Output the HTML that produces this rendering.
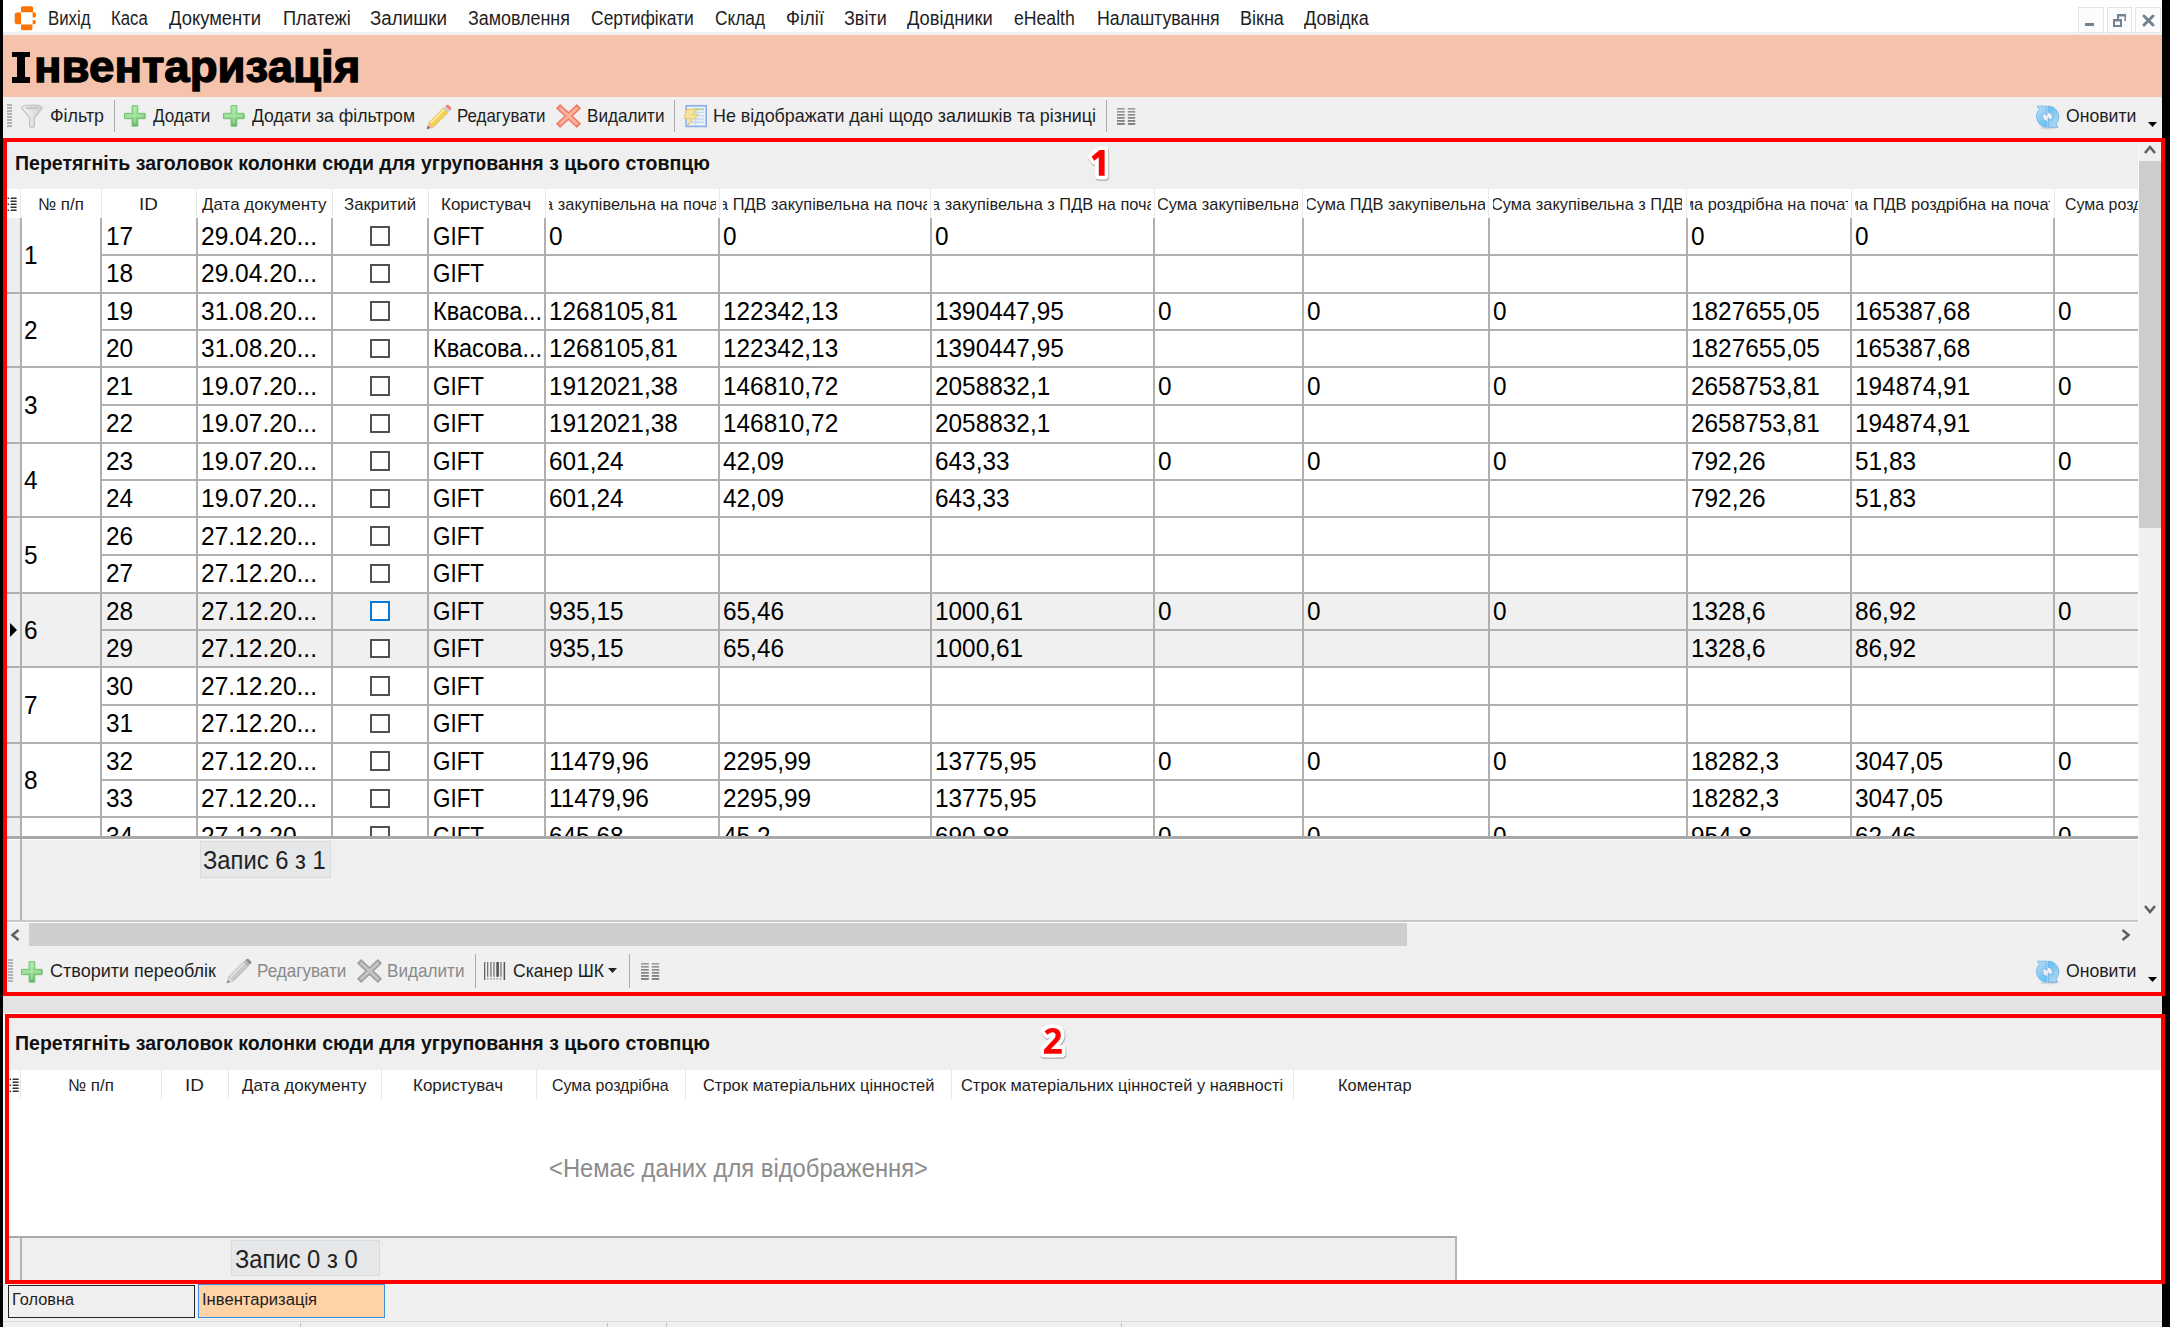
<!DOCTYPE html>
<html><head><meta charset="utf-8"><title>Інвентаризація</title>
<style>
html,body{margin:0;padding:0}
body{width:2170px;height:1327px;overflow:hidden;position:relative;font-family:"Liberation Sans", sans-serif;background:#F0F0F0}
.a{position:absolute}
.t{position:absolute;white-space:pre;line-height:1;transform-origin:0 0}
svg{overflow:visible}
</style></head><body>
<div class="a" style="left:0px;top:0px;width:2170px;height:1327px;background:#F0F0F0;"></div>
<div class="a" style="left:3px;top:0px;width:2159px;height:32px;background:#FFFFFF;"></div>
<div class="a" style="left:3px;top:32px;width:2159px;height:3px;background:#EEEFF0;"></div>
<svg class="a" style="left:14px;top:6px" width="23" height="25" viewBox="0 0 23 25">
<g fill="#FF7300">
<path d="M7 0.3h10.5q1.6 0 1.6 1.8v4.1H7V2.1Q7 0.3 8.6 0.3z"/>
<path d="M7 6.4v11.8H3q-2.3 0-2.3-2.3V8.7q0-2.3 2.3-2.3z"/>
<path d="M7 18.4h11.4v4.1q0 1.8-1.6 1.8H8.6Q7 24.3 7 22.5z"/>
<path d="M18.6 6.3h1.6q1.7 0 1.7 1.7v1.8q0 1.7-1.7 1.7h-1.6z"/>
<path d="M18.6 14h1.6q1.7 0 1.7 1.7v0.8q0 1.7-1.7 1.7h-1.6z"/>
</g></svg>
<div class="t" style="left:47.90px;top:9.49px;font-size:19.5px;font-weight:400;color:#1E1E1E;transform:scaleX(0.8610);">Вихід</div>
<div class="t" style="left:111.30px;top:9.49px;font-size:19.5px;font-weight:400;color:#1E1E1E;transform:scaleX(0.8572);">Каса</div>
<div class="t" style="left:168.90px;top:9.49px;font-size:19.5px;font-weight:400;color:#1E1E1E;transform:scaleX(0.9445);">Документи</div>
<div class="t" style="left:282.50px;top:9.49px;font-size:19.5px;font-weight:400;color:#1E1E1E;transform:scaleX(0.9348);">Платежі</div>
<div class="t" style="left:369.80px;top:9.49px;font-size:19.5px;font-weight:400;color:#1E1E1E;transform:scaleX(0.9629);">Залишки</div>
<div class="t" style="left:467.60px;top:9.49px;font-size:19.5px;font-weight:400;color:#1E1E1E;transform:scaleX(0.9171);">Замовлення</div>
<div class="t" style="left:591.10px;top:9.49px;font-size:19.5px;font-weight:400;color:#1E1E1E;transform:scaleX(0.8967);">Сертифікати</div>
<div class="t" style="left:715.20px;top:9.49px;font-size:19.5px;font-weight:400;color:#1E1E1E;transform:scaleX(0.8877);">Склад</div>
<div class="t" style="left:786.00px;top:9.49px;font-size:19.5px;font-weight:400;color:#1E1E1E;transform:scaleX(0.9430);">Філії</div>
<div class="t" style="left:843.80px;top:9.49px;font-size:19.5px;font-weight:400;color:#1E1E1E;transform:scaleX(0.9223);">Звіти</div>
<div class="t" style="left:907.00px;top:9.49px;font-size:19.5px;font-weight:400;color:#1E1E1E;transform:scaleX(0.9373);">Довідники</div>
<div class="t" style="left:1014.20px;top:9.49px;font-size:19.5px;font-weight:400;color:#1E1E1E;transform:scaleX(0.9045);">eHealth</div>
<div class="t" style="left:1096.50px;top:9.49px;font-size:19.5px;font-weight:400;color:#1E1E1E;transform:scaleX(0.9096);">Налаштування</div>
<div class="t" style="left:1239.90px;top:9.49px;font-size:19.5px;font-weight:400;color:#1E1E1E;transform:scaleX(0.9245);">Вікна</div>
<div class="t" style="left:1303.80px;top:9.49px;font-size:19.5px;font-weight:400;color:#1E1E1E;transform:scaleX(0.9222);">Довідка</div>
<div class="a" style="left:2078px;top:7px;width:25.5px;height:25.5px;background:#FCFCFC;border:1px solid #E2E4E6;box-sizing:border-box;"></div>
<div class="a" style="left:2106.5px;top:7px;width:25.5px;height:25.5px;background:#FCFCFC;border:1px solid #E2E4E6;box-sizing:border-box;"></div>
<div class="a" style="left:2135px;top:7px;width:25.5px;height:25.5px;background:#FCFCFC;border:1px solid #E2E4E6;box-sizing:border-box;"></div>
<svg class="a" style="left:2078px;top:7px" width="84" height="26" viewBox="0 0 84 26">
<g fill="#738293">
<rect x="7" y="16" width="9" height="3"/>
<path d="M39 7h9v7h-1.5V9.5H41V12h-2z"/>
<path d="M35 12h9v8h-9z M37 14.5v3.5h5v-3.5z" fill-rule="evenodd"/>
</g>
<path d="M66 9L75 18M75 9L66 18" stroke="#738293" stroke-width="3" stroke-linecap="round"/>
</svg>
<div class="a" style="left:3px;top:35px;width:2159px;height:61.5px;background:#F5C3AB;"></div>
<div class="a" style="left:12.2px;top:51.5px;width:18px;height:5.6px;background:#000;"></div>
<div class="a" style="left:12.2px;top:77.2px;width:18px;height:5.5px;background:#000;"></div>
<div class="a" style="left:17px;top:51.5px;width:8.4px;height:31.2px;background:#000;"></div>
<div class="t" style="left:33.60px;top:44.82px;font-size:44.5px;font-weight:700;color:#000;transform:scaleX(1.0254);-webkit-text-stroke:1.3px #000;">нвентаризація</div>
<div class="a" style="left:3px;top:96.5px;width:2159px;height:41.5px;background:#F0F0F0;"></div>
<div class="a" style="left:7px;top:104px;width:5px;height:1.5px;background:#B2B2B2;"></div>
<div class="a" style="left:7px;top:107px;width:5px;height:1.5px;background:#B2B2B2;"></div>
<div class="a" style="left:7px;top:110px;width:5px;height:1.5px;background:#B2B2B2;"></div>
<div class="a" style="left:7px;top:113px;width:5px;height:1.5px;background:#B2B2B2;"></div>
<div class="a" style="left:7px;top:116px;width:5px;height:1.5px;background:#B2B2B2;"></div>
<div class="a" style="left:7px;top:119px;width:5px;height:1.5px;background:#B2B2B2;"></div>
<div class="a" style="left:7px;top:122px;width:5px;height:1.5px;background:#B2B2B2;"></div>
<div class="a" style="left:7px;top:125px;width:5px;height:1.5px;background:#B2B2B2;"></div>
<svg class="a" style="left:21px;top:104px" width="22" height="25" viewBox="0 0 22 25">
<defs><linearGradient id="fng" x1="0" y1="0" x2="1" y2="0"><stop offset="0" stop-color="#F6F6F6"/><stop offset="0.55" stop-color="#E2E2E2"/><stop offset="1" stop-color="#CFCFCF"/></linearGradient></defs>
<path d="M0.8 3.8Q0.8 1 11 1Q21.2 1 21.2 3.8L13.3 14.2V22.6Q11 24.2 8.7 22.6V14.2Z" fill="url(#fng)" stroke="#BDBDBD" stroke-width="1.1" stroke-linejoin="round"/>
<ellipse cx="11" cy="4" rx="7.2" ry="1.4" fill="#C8C8C8"/>
</svg>
<div class="t" style="left:50.00px;top:106.84px;font-size:18.5px;font-weight:400;color:#1E1E1E;transform:scaleX(0.9654);">Фільтр</div>
<div class="a" style="left:114px;top:99.5px;width:1.3px;height:32.5px;background:#ABABAB;"></div>
<svg class="a" style="left:124px;top:105px" width="22" height="22" viewBox="0 0 22 22">
<defs><linearGradient id="gp124_105" x1="0" y1="0" x2="0.3" y2="1"><stop offset="0" stop-color="#B0F2AA"/><stop offset="0.55" stop-color="#95DC92"/><stop offset="1" stop-color="#6CB86A"/></linearGradient></defs>
<path d="M8.1 0.7h5.7v7.6h7.4v5.4h-7.4v7.5H8.1v-7.5H0.5V8.3h7.6z" fill="url(#gp124_105)" stroke="#78C076" stroke-width="1"/>
<path d="M10.9 2.5v16M2.5 11h16.5" stroke="#B2F0AE" stroke-width="1.4" opacity="0.7"/>
</svg>
<div class="t" style="left:152.60px;top:106.84px;font-size:18.5px;font-weight:400;color:#1E1E1E;transform:scaleX(0.9242);">Додати</div>
<svg class="a" style="left:222.6px;top:105px" width="22" height="22" viewBox="0 0 22 22">
<defs><linearGradient id="gp222_105" x1="0" y1="0" x2="0.3" y2="1"><stop offset="0" stop-color="#B0F2AA"/><stop offset="0.55" stop-color="#95DC92"/><stop offset="1" stop-color="#6CB86A"/></linearGradient></defs>
<path d="M8.1 0.7h5.7v7.6h7.4v5.4h-7.4v7.5H8.1v-7.5H0.5V8.3h7.6z" fill="url(#gp222_105)" stroke="#78C076" stroke-width="1"/>
<path d="M10.9 2.5v16M2.5 11h16.5" stroke="#B2F0AE" stroke-width="1.4" opacity="0.7"/>
</svg>
<div class="t" style="left:251.60px;top:106.84px;font-size:18.5px;font-weight:400;color:#1E1E1E;transform:scaleX(0.9518);">Додати за фільтром</div>
<svg class="a" style="left:425.8px;top:103.5px" width="26" height="26" viewBox="0 0 26 26">
<path d="M1 25L3 18.5L17.5 4L22 8.5L7.5 23z" fill="#F3D24E" stroke="#D2A640" stroke-width="0.9" stroke-dasharray="1.2 0.8"/>
<path d="M4.5 19L18.5 5" stroke="#FBF0B0" stroke-width="1.6"/>
<path d="M1 25L3 18.5L7.5 23z" fill="#F7B99C"/>
<path d="M1 25L1.9 22L4 24.1z" fill="#555"/>
<path d="M17.5 4L19.5 2L24 6.5L22 8.5z" fill="#CFCFCF"/>
<path d="M19.5 2L20.5 1Q21.5 0.3 22.5 1L25 3.5Q25.7 4.5 25 5.5L24 6.5z" fill="#EE7E7E"/>
</svg>
<div class="t" style="left:456.50px;top:106.84px;font-size:18.5px;font-weight:400;color:#1E1E1E;transform:scaleX(0.9141);">Редагувати</div>
<svg class="a" style="left:557px;top:105px" width="23" height="22" viewBox="0 0 23 22">
<path d="M3.2 3.2L19.8 18.8M19.8 3.2L3.2 18.8" stroke="#F27B62" stroke-width="6" stroke-linecap="square"/>
<path d="M3.5 3.5L19.5 18.5M19.5 3.5L3.5 18.5" stroke="#FDB49E" stroke-width="3" stroke-linecap="square"/>
</svg>
<div class="t" style="left:586.50px;top:106.84px;font-size:18.5px;font-weight:400;color:#1E1E1E;transform:scaleX(0.9259);">Видалити</div>
<div class="a" style="left:674px;top:99.5px;width:1.3px;height:32.5px;background:#ABABAB;"></div>
<svg class="a" style="left:683px;top:104px" width="25" height="24" viewBox="0 0 25 24">
<rect x="3.2" y="1.8" width="20" height="20.6" fill="#EEF3FB" stroke="#8DB2E2" stroke-width="1.7"/>
<g stroke="#C4D8F0" stroke-width="1.5"><path d="M6 8.6h15M6 11.8h15M6 15h15M6 18.2h15"/><path d="M12.8 6.5v14.5"/></g>
<path d="M10 5.3h11" stroke="#9BD39B" stroke-width="1.6"/>
<path d="M3.6 5.3L14.2 5.3L9.6 10.6L15.6 10.6L4.6 21.6L7.6 14.6L0.8 14.6Z" fill="#F6E39A" stroke="#E2C062" stroke-width="0.8" stroke-linejoin="round"/>
</svg>
<div class="t" style="left:713.00px;top:106.84px;font-size:18.5px;font-weight:400;color:#1E1E1E;transform:scaleX(0.9657);">Не відображати дані щодо залишків та різниці</div>
<div class="a" style="left:1106px;top:99.5px;width:1.3px;height:32.5px;background:#ABABAB;"></div>
<svg class="a" style="left:1117px;top:108px" width="19" height="20"><rect x="0" y="0.00" width="7.8" height="1.6" fill="#9A9A9A"/><rect x="10.8" y="0.00" width="7.4" height="1.6" fill="#9A9A9A"/><rect x="0" y="3.03" width="7.8" height="1.6" fill="#909090"/><rect x="10.8" y="3.03" width="7.4" height="1.6" fill="#909090"/><rect x="0" y="6.06" width="7.8" height="1.6" fill="#868686"/><rect x="10.8" y="6.06" width="7.4" height="1.6" fill="#868686"/><rect x="0" y="9.09" width="7.8" height="1.6" fill="#7C7C7C"/><rect x="10.8" y="9.09" width="7.4" height="1.6" fill="#7C7C7C"/><rect x="0" y="12.12" width="7.8" height="1.6" fill="#727272"/><rect x="10.8" y="12.12" width="7.4" height="1.6" fill="#727272"/><rect x="0" y="15.15" width="7.8" height="1.6" fill="#686868"/><rect x="10.8" y="15.15" width="7.4" height="1.6" fill="#686868"/></svg>
<svg class="a" style="left:2036px;top:105px" width="24" height="25" viewBox="0 0 24 25">
<defs><linearGradient id="rf2037_105" x1="0" y1="0" x2="0.5" y2="1"><stop offset="0" stop-color="#B2E2FB"/><stop offset="0.55" stop-color="#94CCF0"/><stop offset="1" stop-color="#62C6F8"/></linearGradient></defs>
<ellipse cx="12.5" cy="23" rx="8.5" ry="1.4" fill="#000" opacity="0.1"/>
<path d="M1.2 1.2H11V10.6L8.2 8.2A4.6 4.6 0 0 0 11 16.2V22.2A10.6 10.6 0 0 1 3.4 4.4Z" fill="url(#rf2037_105)" stroke="#80B6E6" stroke-width="0.9" stroke-linejoin="round"/>
<path d="M1.2 1.2H11V10.6L8.2 8.2A4.6 4.6 0 0 0 11 16.2V22.2A10.6 10.6 0 0 1 3.4 4.4Z" transform="rotate(180 11.6 11.7)" fill="url(#rf2037_105)" stroke="#70AADF" stroke-width="0.9" stroke-linejoin="round"/>
</svg>
<div class="t" style="left:2066.00px;top:106.84px;font-size:18.5px;font-weight:400;color:#1E1E1E;transform:scaleX(0.9530);">Оновити</div>
<svg class="a" style="left:2147.5px;top:122px" width="9" height="5"><path d="M0 0h9L4.5 5z" fill="#000"/></svg>
<div class="a" style="left:7px;top:142px;width:2132px;height:47px;background:#EFEFEF;"></div>
<div class="t" style="left:15.20px;top:153.89px;font-size:19.5px;font-weight:700;color:#111;transform:scaleX(1.0011);">Перетягніть заголовок колонки сюди для угруповання з цього стовпцю</div>
<div class="a" style="left:2139px;top:142px;width:22px;height:779px;background:#F0F0F0;"></div>
<div class="a" style="left:2137.7px;top:142px;width:1.3px;height:779px;background:#FAFAFA;"></div>
<div class="a" style="left:2139px;top:161px;width:21.6px;height:367px;background:#CDCDCD;"></div>
<svg class="a" style="left:2144px;top:144px" width="12" height="10"><path d="M1 9L6 3L11 9" stroke="#606060" stroke-width="2.6" fill="none"/></svg>
<svg class="a" style="left:2144px;top:905px" width="12" height="10"><path d="M1 1L6 7L11 1" stroke="#606060" stroke-width="2.6" fill="none"/></svg>
<div class="a" style="left:7px;top:189px;width:2130.7px;height:647px;overflow:hidden;background:#fff">
<div class="a" style="left:0px;top:29.30000000000001px;width:13.6px;height:640px;background:#EEEEEE;"></div>
<div class="a" style="left:13.600000000000001px;top:404.29999999999995px;width:2300px;height:75.0px;background:#F0F0F0;"></div>
<div class="a" style="left:13px;top:29px;width:2px;height:640px;background:#B0B0B0;"></div>
<div class="a" style="left:93px;top:29px;width:2px;height:640px;background:#B0B0B0;"></div>
<div class="a" style="left:189px;top:29px;width:2px;height:640px;background:#B0B0B0;"></div>
<div class="a" style="left:324px;top:29px;width:2px;height:640px;background:#B0B0B0;"></div>
<div class="a" style="left:420px;top:29px;width:2px;height:640px;background:#B0B0B0;"></div>
<div class="a" style="left:537px;top:29px;width:2px;height:640px;background:#B0B0B0;"></div>
<div class="a" style="left:711px;top:29px;width:2px;height:640px;background:#B0B0B0;"></div>
<div class="a" style="left:923px;top:29px;width:2px;height:640px;background:#B0B0B0;"></div>
<div class="a" style="left:1146px;top:29px;width:2px;height:640px;background:#B0B0B0;"></div>
<div class="a" style="left:1295px;top:29px;width:2px;height:640px;background:#B0B0B0;"></div>
<div class="a" style="left:1481px;top:29px;width:2px;height:640px;background:#B0B0B0;"></div>
<div class="a" style="left:1679px;top:29px;width:2px;height:640px;background:#B0B0B0;"></div>
<div class="a" style="left:1843px;top:29px;width:2px;height:640px;background:#B0B0B0;"></div>
<div class="a" style="left:2046px;top:29px;width:2px;height:640px;background:#B0B0B0;"></div>
<div class="a" style="left:94px;top:65px;width:2300px;height:2px;background:#B0B0B0;"></div>
<div class="a" style="left:0px;top:103px;width:2300px;height:2px;background:#B0B0B0;"></div>
<div class="a" style="left:94px;top:140px;width:2300px;height:2px;background:#B0B0B0;"></div>
<div class="a" style="left:0px;top:177px;width:2300px;height:2px;background:#B0B0B0;"></div>
<div class="a" style="left:94px;top:215px;width:2300px;height:2px;background:#B0B0B0;"></div>
<div class="a" style="left:0px;top:253px;width:2300px;height:2px;background:#B0B0B0;"></div>
<div class="a" style="left:94px;top:290px;width:2300px;height:2px;background:#B0B0B0;"></div>
<div class="a" style="left:0px;top:327px;width:2300px;height:2px;background:#B0B0B0;"></div>
<div class="a" style="left:94px;top:365px;width:2300px;height:2px;background:#B0B0B0;"></div>
<div class="a" style="left:0px;top:403px;width:2300px;height:2px;background:#B0B0B0;"></div>
<div class="a" style="left:94px;top:440px;width:2300px;height:2px;background:#B0B0B0;"></div>
<div class="a" style="left:0px;top:477px;width:2300px;height:2px;background:#B0B0B0;"></div>
<div class="a" style="left:94px;top:515px;width:2300px;height:2px;background:#B0B0B0;"></div>
<div class="a" style="left:0px;top:553px;width:2300px;height:2px;background:#B0B0B0;"></div>
<div class="a" style="left:94px;top:590px;width:2300px;height:2px;background:#B0B0B0;"></div>
<div class="a" style="left:0px;top:627px;width:2300px;height:2px;background:#B0B0B0;"></div>
<div class="a" style="left:94px;top:665px;width:2300px;height:2px;background:#B0B0B0;"></div>
<div class="a" style="left:0px;top:703px;width:2300px;height:2px;background:#B0B0B0;"></div>
<div class="a" style="left:13.100000000000001px;top:0px;width:1.2px;height:29px;background:#E8E8E8;"></div>
<div class="a" style="left:93.5px;top:0px;width:1.2px;height:29px;background:#E8E8E8;"></div>
<div class="a" style="left:189.1px;top:0px;width:1.2px;height:29px;background:#E8E8E8;"></div>
<div class="a" style="left:324.5px;top:0px;width:1.2px;height:29px;background:#E8E8E8;"></div>
<div class="a" style="left:420.5px;top:0px;width:1.2px;height:29px;background:#E8E8E8;"></div>
<div class="a" style="left:537.5px;top:0px;width:1.2px;height:29px;background:#E8E8E8;"></div>
<div class="a" style="left:711.5px;top:0px;width:1.2px;height:29px;background:#E8E8E8;"></div>
<div class="a" style="left:923.1px;top:0px;width:1.2px;height:29px;background:#E8E8E8;"></div>
<div class="a" style="left:1146.7px;top:0px;width:1.2px;height:29px;background:#E8E8E8;"></div>
<div class="a" style="left:1295.0px;top:0px;width:1.2px;height:29px;background:#E8E8E8;"></div>
<div class="a" style="left:1481.2px;top:0px;width:1.2px;height:29px;background:#E8E8E8;"></div>
<div class="a" style="left:1678.9px;top:0px;width:1.2px;height:29px;background:#E8E8E8;"></div>
<div class="a" style="left:1843.8px;top:0px;width:1.2px;height:29px;background:#E8E8E8;"></div>
<div class="a" style="left:2046.5px;top:0px;width:1.2px;height:29px;background:#E8E8E8;"></div>
</div>
<div class="a" style="left:24.6px;top:189px;width:72.4px;height:29px;overflow:hidden">
<div class="t" style="left:13.30px;top:7.21px;font-size:17px;font-weight:400;color:#1E1E1E;transform:scaleX(0.9932);">№ п/п</div>
</div>
<div class="a" style="left:105px;top:189px;width:87.6px;height:29px;overflow:hidden">
<div class="t" style="left:34.35px;top:7.21px;font-size:17px;font-weight:400;color:#1E1E1E;transform:scaleX(1.1118);">ID</div>
</div>
<div class="a" style="left:200.6px;top:189px;width:127.4px;height:29px;overflow:hidden">
<div class="t" style="left:1.45px;top:7.21px;font-size:17px;font-weight:400;color:#1E1E1E;transform:scaleX(0.9985);">Дата документу</div>
</div>
<div class="a" style="left:336px;top:189px;width:88px;height:29px;overflow:hidden">
<div class="t" style="left:8.00px;top:7.21px;font-size:17px;font-weight:400;color:#1E1E1E;transform:scaleX(0.9879);">Закритий</div>
</div>
<div class="a" style="left:432px;top:189px;width:109px;height:29px;overflow:hidden">
<div class="t" style="left:9.48px;top:7.21px;font-size:17px;font-weight:400;color:#1E1E1E;transform:scaleX(0.9995);">Користувач</div>
</div>
<div class="a" style="left:548.5px;top:189px;width:167.0px;height:29px;overflow:hidden">
<div class="t" style="left:-35.66px;top:7.21px;font-size:17px;font-weight:400;color:#1E1E1E;transform:scaleX(0.9635);">Сума закупівельна на початок</div>
</div>
<div class="a" style="left:722.5px;top:189px;width:204.60000000000002px;height:29px;overflow:hidden">
<div class="t" style="left:-34.26px;top:7.21px;font-size:17px;font-weight:400;color:#1E1E1E;transform:scaleX(0.9635);">Сума ПДВ закупівельна на початок</div>
</div>
<div class="a" style="left:934.1px;top:189px;width:216.60000000000002px;height:29px;overflow:hidden">
<div class="t" style="left:-34.36px;top:7.21px;font-size:17px;font-weight:400;color:#1E1E1E;transform:scaleX(0.9635);">Сума закупівельна з ПДВ на початок</div>
</div>
<div class="a" style="left:1158.2px;top:189px;width:140.29999999999995px;height:29px;overflow:hidden">
<div class="t" style="left:-1.23px;top:7.21px;font-size:17px;font-weight:400;color:#1E1E1E;transform:scaleX(0.9635);">Сума закупівельна</div>
</div>
<div class="a" style="left:1306.5px;top:189px;width:178.20000000000005px;height:29px;overflow:hidden">
<div class="t" style="left:-1.46px;top:7.21px;font-size:17px;font-weight:400;color:#1E1E1E;transform:scaleX(0.9635);">Сума ПДВ закупівельна</div>
</div>
<div class="a" style="left:1492.7px;top:189px;width:189.70000000000005px;height:29px;overflow:hidden">
<div class="t" style="left:-1.74px;top:7.21px;font-size:17px;font-weight:400;color:#1E1E1E;transform:scaleX(0.9635);">Сума закупівельна з ПДВ</div>
</div>
<div class="a" style="left:1689.9px;top:189px;width:157.89999999999986px;height:29px;overflow:hidden">
<div class="t" style="left:-27.16px;top:7.21px;font-size:17px;font-weight:400;color:#1E1E1E;transform:scaleX(0.9635);">Сума роздрібна на початок</div>
</div>
<div class="a" style="left:1854.8px;top:189px;width:195.70000000000005px;height:29px;overflow:hidden">
<div class="t" style="left:-26.66px;top:7.21px;font-size:17px;font-weight:400;color:#1E1E1E;transform:scaleX(0.9635);">Сума ПДВ роздрібна на початок</div>
</div>
<div class="a" style="left:2057.5px;top:189px;width:80.19999999999982px;height:29px;overflow:hidden">
<div class="t" style="left:7.10px;top:7.21px;font-size:17px;font-weight:400;color:#1E1E1E;transform:scaleX(0.9381);">Сума роздрібна</div>
</div>
<svg class="a" style="left:7px;top:196.5px" width="11" height="15" viewBox="0 0 11 15"><rect x="3.5" y="0.5" width="6.2" height="1.6" rx="0.5" fill="#333"/><rect x="3.5" y="3.5" width="6.2" height="1.6" rx="0.5" fill="#333"/><rect x="3.5" y="6.5" width="6.2" height="1.6" rx="0.5" fill="#333"/><rect x="3.5" y="9.5" width="6.2" height="1.6" rx="0.5" fill="#333"/><rect x="3.5" y="12.5" width="6.2" height="1.6" rx="0.5" fill="#333"/><rect x="0.6" y="0.5" width="1.4" height="1.6" fill="#333"/><rect x="0.6" y="6.5" width="1.4" height="1.6" fill="#333"/><rect x="0.6" y="12.5" width="1.4" height="1.6" fill="#333"/></svg>
<div class="a" style="left:20.6px;top:218.3px;width:80.4px;height:75.0px;overflow:hidden">
<div class="t" style="left:3.60px;top:24.56px;font-size:25px;font-weight:400;color:#000;transform:scaleX(0.9750);">1</div>
</div>
<div class="a" style="left:101px;top:218.3px;width:95.6px;height:37.5px;overflow:hidden">
<div class="t" style="left:4.50px;top:5.31px;font-size:25px;font-weight:400;color:#000;transform:scaleX(0.9750);">17</div>
</div>
<div class="a" style="left:196.6px;top:218.3px;width:135.4px;height:37.5px;overflow:hidden">
<div class="t" style="left:4.50px;top:5.31px;font-size:25px;font-weight:400;color:#000;transform:scaleX(0.9818);">29.04.20...</div>
</div>
<div class="a" style="left:428px;top:218.3px;width:117px;height:37.5px;overflow:hidden">
<div class="t" style="left:4.50px;top:5.31px;font-size:25px;font-weight:400;color:#000;transform:scaleX(0.8957);">GIFT</div>
</div>
<div class="a" style="left:545px;top:218.3px;width:174px;height:37.5px;overflow:hidden">
<div class="t" style="left:4.20px;top:5.31px;font-size:25px;font-weight:400;color:#000;transform:scaleX(0.9750);">0</div>
</div>
<div class="a" style="left:719px;top:218.3px;width:211.60000000000002px;height:37.5px;overflow:hidden">
<div class="t" style="left:4.20px;top:5.31px;font-size:25px;font-weight:400;color:#000;transform:scaleX(0.9750);">0</div>
</div>
<div class="a" style="left:930.6px;top:218.3px;width:223.60000000000002px;height:37.5px;overflow:hidden">
<div class="t" style="left:4.20px;top:5.31px;font-size:25px;font-weight:400;color:#000;transform:scaleX(0.9750);">0</div>
</div>
<div class="a" style="left:1686.4px;top:218.3px;width:164.89999999999986px;height:37.5px;overflow:hidden">
<div class="t" style="left:4.20px;top:5.31px;font-size:25px;font-weight:400;color:#000;transform:scaleX(0.9750);">0</div>
</div>
<div class="a" style="left:1851.3px;top:218.3px;width:202.70000000000005px;height:37.5px;overflow:hidden">
<div class="t" style="left:4.20px;top:5.31px;font-size:25px;font-weight:400;color:#000;transform:scaleX(0.9750);">0</div>
</div>
<div class="a" style="left:332px;top:218.3px;width:96px;height:37.5px;overflow:hidden"><div class="a" style="left:38.4px;top:7.9px;width:19.4px;height:19.4px;box-sizing:border-box;border:2px solid #505050;background:#fff"></div></div>
<div class="a" style="left:101px;top:255.8px;width:95.6px;height:37.5px;overflow:hidden">
<div class="t" style="left:4.50px;top:5.31px;font-size:25px;font-weight:400;color:#000;transform:scaleX(0.9750);">18</div>
</div>
<div class="a" style="left:196.6px;top:255.8px;width:135.4px;height:37.5px;overflow:hidden">
<div class="t" style="left:4.50px;top:5.31px;font-size:25px;font-weight:400;color:#000;transform:scaleX(0.9818);">29.04.20...</div>
</div>
<div class="a" style="left:428px;top:255.8px;width:117px;height:37.5px;overflow:hidden">
<div class="t" style="left:4.50px;top:5.31px;font-size:25px;font-weight:400;color:#000;transform:scaleX(0.8957);">GIFT</div>
</div>
<div class="a" style="left:332px;top:255.8px;width:96px;height:37.5px;overflow:hidden"><div class="a" style="left:38.4px;top:7.9px;width:19.4px;height:19.4px;box-sizing:border-box;border:2px solid #505050;background:#fff"></div></div>
<div class="a" style="left:20.6px;top:293.3px;width:80.4px;height:75.0px;overflow:hidden">
<div class="t" style="left:3.60px;top:24.56px;font-size:25px;font-weight:400;color:#000;transform:scaleX(0.9750);">2</div>
</div>
<div class="a" style="left:101px;top:293.3px;width:95.6px;height:37.5px;overflow:hidden">
<div class="t" style="left:4.50px;top:5.31px;font-size:25px;font-weight:400;color:#000;transform:scaleX(0.9750);">19</div>
</div>
<div class="a" style="left:196.6px;top:293.3px;width:135.4px;height:37.5px;overflow:hidden">
<div class="t" style="left:4.50px;top:5.31px;font-size:25px;font-weight:400;color:#000;transform:scaleX(0.9818);">31.08.20...</div>
</div>
<div class="a" style="left:428px;top:293.3px;width:117px;height:37.5px;overflow:hidden">
<div class="t" style="left:4.50px;top:5.31px;font-size:25px;font-weight:400;color:#000;transform:scaleX(0.9404);">Квасова...</div>
</div>
<div class="a" style="left:545px;top:293.3px;width:174px;height:37.5px;overflow:hidden">
<div class="t" style="left:4.20px;top:5.31px;font-size:25px;font-weight:400;color:#000;transform:scaleX(0.9750);">1268105,81</div>
</div>
<div class="a" style="left:719px;top:293.3px;width:211.60000000000002px;height:37.5px;overflow:hidden">
<div class="t" style="left:4.20px;top:5.31px;font-size:25px;font-weight:400;color:#000;transform:scaleX(0.9750);">122342,13</div>
</div>
<div class="a" style="left:930.6px;top:293.3px;width:223.60000000000002px;height:37.5px;overflow:hidden">
<div class="t" style="left:4.20px;top:5.31px;font-size:25px;font-weight:400;color:#000;transform:scaleX(0.9750);">1390447,95</div>
</div>
<div class="a" style="left:1154.2px;top:293.3px;width:148.29999999999995px;height:37.5px;overflow:hidden">
<div class="t" style="left:4.20px;top:5.31px;font-size:25px;font-weight:400;color:#000;transform:scaleX(0.9750);">0</div>
</div>
<div class="a" style="left:1302.5px;top:293.3px;width:186.20000000000005px;height:37.5px;overflow:hidden">
<div class="t" style="left:4.20px;top:5.31px;font-size:25px;font-weight:400;color:#000;transform:scaleX(0.9750);">0</div>
</div>
<div class="a" style="left:1488.7px;top:293.3px;width:197.70000000000005px;height:37.5px;overflow:hidden">
<div class="t" style="left:4.20px;top:5.31px;font-size:25px;font-weight:400;color:#000;transform:scaleX(0.9750);">0</div>
</div>
<div class="a" style="left:1686.4px;top:293.3px;width:164.89999999999986px;height:37.5px;overflow:hidden">
<div class="t" style="left:4.20px;top:5.31px;font-size:25px;font-weight:400;color:#000;transform:scaleX(0.9750);">1827655,05</div>
</div>
<div class="a" style="left:1851.3px;top:293.3px;width:202.70000000000005px;height:37.5px;overflow:hidden">
<div class="t" style="left:4.20px;top:5.31px;font-size:25px;font-weight:400;color:#000;transform:scaleX(0.9750);">165387,68</div>
</div>
<div class="a" style="left:2054px;top:293.3px;width:83.69999999999982px;height:37.5px;overflow:hidden">
<div class="t" style="left:4.20px;top:5.31px;font-size:25px;font-weight:400;color:#000;transform:scaleX(0.9750);">0</div>
</div>
<div class="a" style="left:332px;top:293.3px;width:96px;height:37.5px;overflow:hidden"><div class="a" style="left:38.4px;top:7.9px;width:19.4px;height:19.4px;box-sizing:border-box;border:2px solid #505050;background:#fff"></div></div>
<div class="a" style="left:101px;top:330.8px;width:95.6px;height:37.5px;overflow:hidden">
<div class="t" style="left:4.50px;top:5.31px;font-size:25px;font-weight:400;color:#000;transform:scaleX(0.9750);">20</div>
</div>
<div class="a" style="left:196.6px;top:330.8px;width:135.4px;height:37.5px;overflow:hidden">
<div class="t" style="left:4.50px;top:5.31px;font-size:25px;font-weight:400;color:#000;transform:scaleX(0.9818);">31.08.20...</div>
</div>
<div class="a" style="left:428px;top:330.8px;width:117px;height:37.5px;overflow:hidden">
<div class="t" style="left:4.50px;top:5.31px;font-size:25px;font-weight:400;color:#000;transform:scaleX(0.9404);">Квасова...</div>
</div>
<div class="a" style="left:545px;top:330.8px;width:174px;height:37.5px;overflow:hidden">
<div class="t" style="left:4.20px;top:5.31px;font-size:25px;font-weight:400;color:#000;transform:scaleX(0.9750);">1268105,81</div>
</div>
<div class="a" style="left:719px;top:330.8px;width:211.60000000000002px;height:37.5px;overflow:hidden">
<div class="t" style="left:4.20px;top:5.31px;font-size:25px;font-weight:400;color:#000;transform:scaleX(0.9750);">122342,13</div>
</div>
<div class="a" style="left:930.6px;top:330.8px;width:223.60000000000002px;height:37.5px;overflow:hidden">
<div class="t" style="left:4.20px;top:5.31px;font-size:25px;font-weight:400;color:#000;transform:scaleX(0.9750);">1390447,95</div>
</div>
<div class="a" style="left:1686.4px;top:330.8px;width:164.89999999999986px;height:37.5px;overflow:hidden">
<div class="t" style="left:4.20px;top:5.31px;font-size:25px;font-weight:400;color:#000;transform:scaleX(0.9750);">1827655,05</div>
</div>
<div class="a" style="left:1851.3px;top:330.8px;width:202.70000000000005px;height:37.5px;overflow:hidden">
<div class="t" style="left:4.20px;top:5.31px;font-size:25px;font-weight:400;color:#000;transform:scaleX(0.9750);">165387,68</div>
</div>
<div class="a" style="left:332px;top:330.8px;width:96px;height:37.5px;overflow:hidden"><div class="a" style="left:38.4px;top:7.9px;width:19.4px;height:19.4px;box-sizing:border-box;border:2px solid #505050;background:#fff"></div></div>
<div class="a" style="left:20.6px;top:368.3px;width:80.4px;height:75.0px;overflow:hidden">
<div class="t" style="left:3.60px;top:24.56px;font-size:25px;font-weight:400;color:#000;transform:scaleX(0.9750);">3</div>
</div>
<div class="a" style="left:101px;top:368.3px;width:95.6px;height:37.5px;overflow:hidden">
<div class="t" style="left:4.50px;top:5.31px;font-size:25px;font-weight:400;color:#000;transform:scaleX(0.9750);">21</div>
</div>
<div class="a" style="left:196.6px;top:368.3px;width:135.4px;height:37.5px;overflow:hidden">
<div class="t" style="left:4.50px;top:5.31px;font-size:25px;font-weight:400;color:#000;transform:scaleX(0.9818);">19.07.20...</div>
</div>
<div class="a" style="left:428px;top:368.3px;width:117px;height:37.5px;overflow:hidden">
<div class="t" style="left:4.50px;top:5.31px;font-size:25px;font-weight:400;color:#000;transform:scaleX(0.8957);">GIFT</div>
</div>
<div class="a" style="left:545px;top:368.3px;width:174px;height:37.5px;overflow:hidden">
<div class="t" style="left:4.20px;top:5.31px;font-size:25px;font-weight:400;color:#000;transform:scaleX(0.9750);">1912021,38</div>
</div>
<div class="a" style="left:719px;top:368.3px;width:211.60000000000002px;height:37.5px;overflow:hidden">
<div class="t" style="left:4.20px;top:5.31px;font-size:25px;font-weight:400;color:#000;transform:scaleX(0.9750);">146810,72</div>
</div>
<div class="a" style="left:930.6px;top:368.3px;width:223.60000000000002px;height:37.5px;overflow:hidden">
<div class="t" style="left:4.20px;top:5.31px;font-size:25px;font-weight:400;color:#000;transform:scaleX(0.9750);">2058832,1</div>
</div>
<div class="a" style="left:1154.2px;top:368.3px;width:148.29999999999995px;height:37.5px;overflow:hidden">
<div class="t" style="left:4.20px;top:5.31px;font-size:25px;font-weight:400;color:#000;transform:scaleX(0.9750);">0</div>
</div>
<div class="a" style="left:1302.5px;top:368.3px;width:186.20000000000005px;height:37.5px;overflow:hidden">
<div class="t" style="left:4.20px;top:5.31px;font-size:25px;font-weight:400;color:#000;transform:scaleX(0.9750);">0</div>
</div>
<div class="a" style="left:1488.7px;top:368.3px;width:197.70000000000005px;height:37.5px;overflow:hidden">
<div class="t" style="left:4.20px;top:5.31px;font-size:25px;font-weight:400;color:#000;transform:scaleX(0.9750);">0</div>
</div>
<div class="a" style="left:1686.4px;top:368.3px;width:164.89999999999986px;height:37.5px;overflow:hidden">
<div class="t" style="left:4.20px;top:5.31px;font-size:25px;font-weight:400;color:#000;transform:scaleX(0.9750);">2658753,81</div>
</div>
<div class="a" style="left:1851.3px;top:368.3px;width:202.70000000000005px;height:37.5px;overflow:hidden">
<div class="t" style="left:4.20px;top:5.31px;font-size:25px;font-weight:400;color:#000;transform:scaleX(0.9750);">194874,91</div>
</div>
<div class="a" style="left:2054px;top:368.3px;width:83.69999999999982px;height:37.5px;overflow:hidden">
<div class="t" style="left:4.20px;top:5.31px;font-size:25px;font-weight:400;color:#000;transform:scaleX(0.9750);">0</div>
</div>
<div class="a" style="left:332px;top:368.3px;width:96px;height:37.5px;overflow:hidden"><div class="a" style="left:38.4px;top:7.9px;width:19.4px;height:19.4px;box-sizing:border-box;border:2px solid #505050;background:#fff"></div></div>
<div class="a" style="left:101px;top:405.8px;width:95.6px;height:37.5px;overflow:hidden">
<div class="t" style="left:4.50px;top:5.31px;font-size:25px;font-weight:400;color:#000;transform:scaleX(0.9750);">22</div>
</div>
<div class="a" style="left:196.6px;top:405.8px;width:135.4px;height:37.5px;overflow:hidden">
<div class="t" style="left:4.50px;top:5.31px;font-size:25px;font-weight:400;color:#000;transform:scaleX(0.9818);">19.07.20...</div>
</div>
<div class="a" style="left:428px;top:405.8px;width:117px;height:37.5px;overflow:hidden">
<div class="t" style="left:4.50px;top:5.31px;font-size:25px;font-weight:400;color:#000;transform:scaleX(0.8957);">GIFT</div>
</div>
<div class="a" style="left:545px;top:405.8px;width:174px;height:37.5px;overflow:hidden">
<div class="t" style="left:4.20px;top:5.31px;font-size:25px;font-weight:400;color:#000;transform:scaleX(0.9750);">1912021,38</div>
</div>
<div class="a" style="left:719px;top:405.8px;width:211.60000000000002px;height:37.5px;overflow:hidden">
<div class="t" style="left:4.20px;top:5.31px;font-size:25px;font-weight:400;color:#000;transform:scaleX(0.9750);">146810,72</div>
</div>
<div class="a" style="left:930.6px;top:405.8px;width:223.60000000000002px;height:37.5px;overflow:hidden">
<div class="t" style="left:4.20px;top:5.31px;font-size:25px;font-weight:400;color:#000;transform:scaleX(0.9750);">2058832,1</div>
</div>
<div class="a" style="left:1686.4px;top:405.8px;width:164.89999999999986px;height:37.5px;overflow:hidden">
<div class="t" style="left:4.20px;top:5.31px;font-size:25px;font-weight:400;color:#000;transform:scaleX(0.9750);">2658753,81</div>
</div>
<div class="a" style="left:1851.3px;top:405.8px;width:202.70000000000005px;height:37.5px;overflow:hidden">
<div class="t" style="left:4.20px;top:5.31px;font-size:25px;font-weight:400;color:#000;transform:scaleX(0.9750);">194874,91</div>
</div>
<div class="a" style="left:332px;top:405.8px;width:96px;height:37.5px;overflow:hidden"><div class="a" style="left:38.4px;top:7.9px;width:19.4px;height:19.4px;box-sizing:border-box;border:2px solid #505050;background:#fff"></div></div>
<div class="a" style="left:20.6px;top:443.3px;width:80.4px;height:74.99999999999994px;overflow:hidden">
<div class="t" style="left:3.60px;top:24.56px;font-size:25px;font-weight:400;color:#000;transform:scaleX(0.9750);">4</div>
</div>
<div class="a" style="left:101px;top:443.3px;width:95.6px;height:37.5px;overflow:hidden">
<div class="t" style="left:4.50px;top:5.31px;font-size:25px;font-weight:400;color:#000;transform:scaleX(0.9750);">23</div>
</div>
<div class="a" style="left:196.6px;top:443.3px;width:135.4px;height:37.5px;overflow:hidden">
<div class="t" style="left:4.50px;top:5.31px;font-size:25px;font-weight:400;color:#000;transform:scaleX(0.9818);">19.07.20...</div>
</div>
<div class="a" style="left:428px;top:443.3px;width:117px;height:37.5px;overflow:hidden">
<div class="t" style="left:4.50px;top:5.31px;font-size:25px;font-weight:400;color:#000;transform:scaleX(0.8957);">GIFT</div>
</div>
<div class="a" style="left:545px;top:443.3px;width:174px;height:37.5px;overflow:hidden">
<div class="t" style="left:4.20px;top:5.31px;font-size:25px;font-weight:400;color:#000;transform:scaleX(0.9750);">601,24</div>
</div>
<div class="a" style="left:719px;top:443.3px;width:211.60000000000002px;height:37.5px;overflow:hidden">
<div class="t" style="left:4.20px;top:5.31px;font-size:25px;font-weight:400;color:#000;transform:scaleX(0.9750);">42,09</div>
</div>
<div class="a" style="left:930.6px;top:443.3px;width:223.60000000000002px;height:37.5px;overflow:hidden">
<div class="t" style="left:4.20px;top:5.31px;font-size:25px;font-weight:400;color:#000;transform:scaleX(0.9750);">643,33</div>
</div>
<div class="a" style="left:1154.2px;top:443.3px;width:148.29999999999995px;height:37.5px;overflow:hidden">
<div class="t" style="left:4.20px;top:5.31px;font-size:25px;font-weight:400;color:#000;transform:scaleX(0.9750);">0</div>
</div>
<div class="a" style="left:1302.5px;top:443.3px;width:186.20000000000005px;height:37.5px;overflow:hidden">
<div class="t" style="left:4.20px;top:5.31px;font-size:25px;font-weight:400;color:#000;transform:scaleX(0.9750);">0</div>
</div>
<div class="a" style="left:1488.7px;top:443.3px;width:197.70000000000005px;height:37.5px;overflow:hidden">
<div class="t" style="left:4.20px;top:5.31px;font-size:25px;font-weight:400;color:#000;transform:scaleX(0.9750);">0</div>
</div>
<div class="a" style="left:1686.4px;top:443.3px;width:164.89999999999986px;height:37.5px;overflow:hidden">
<div class="t" style="left:4.20px;top:5.31px;font-size:25px;font-weight:400;color:#000;transform:scaleX(0.9750);">792,26</div>
</div>
<div class="a" style="left:1851.3px;top:443.3px;width:202.70000000000005px;height:37.5px;overflow:hidden">
<div class="t" style="left:4.20px;top:5.31px;font-size:25px;font-weight:400;color:#000;transform:scaleX(0.9750);">51,83</div>
</div>
<div class="a" style="left:2054px;top:443.3px;width:83.69999999999982px;height:37.5px;overflow:hidden">
<div class="t" style="left:4.20px;top:5.31px;font-size:25px;font-weight:400;color:#000;transform:scaleX(0.9750);">0</div>
</div>
<div class="a" style="left:332px;top:443.3px;width:96px;height:37.5px;overflow:hidden"><div class="a" style="left:38.4px;top:7.9px;width:19.4px;height:19.4px;box-sizing:border-box;border:2px solid #505050;background:#fff"></div></div>
<div class="a" style="left:101px;top:480.8px;width:95.6px;height:37.49999999999994px;overflow:hidden">
<div class="t" style="left:4.50px;top:5.31px;font-size:25px;font-weight:400;color:#000;transform:scaleX(0.9750);">24</div>
</div>
<div class="a" style="left:196.6px;top:480.8px;width:135.4px;height:37.49999999999994px;overflow:hidden">
<div class="t" style="left:4.50px;top:5.31px;font-size:25px;font-weight:400;color:#000;transform:scaleX(0.9818);">19.07.20...</div>
</div>
<div class="a" style="left:428px;top:480.8px;width:117px;height:37.49999999999994px;overflow:hidden">
<div class="t" style="left:4.50px;top:5.31px;font-size:25px;font-weight:400;color:#000;transform:scaleX(0.8957);">GIFT</div>
</div>
<div class="a" style="left:545px;top:480.8px;width:174px;height:37.49999999999994px;overflow:hidden">
<div class="t" style="left:4.20px;top:5.31px;font-size:25px;font-weight:400;color:#000;transform:scaleX(0.9750);">601,24</div>
</div>
<div class="a" style="left:719px;top:480.8px;width:211.60000000000002px;height:37.49999999999994px;overflow:hidden">
<div class="t" style="left:4.20px;top:5.31px;font-size:25px;font-weight:400;color:#000;transform:scaleX(0.9750);">42,09</div>
</div>
<div class="a" style="left:930.6px;top:480.8px;width:223.60000000000002px;height:37.49999999999994px;overflow:hidden">
<div class="t" style="left:4.20px;top:5.31px;font-size:25px;font-weight:400;color:#000;transform:scaleX(0.9750);">643,33</div>
</div>
<div class="a" style="left:1686.4px;top:480.8px;width:164.89999999999986px;height:37.49999999999994px;overflow:hidden">
<div class="t" style="left:4.20px;top:5.31px;font-size:25px;font-weight:400;color:#000;transform:scaleX(0.9750);">792,26</div>
</div>
<div class="a" style="left:1851.3px;top:480.8px;width:202.70000000000005px;height:37.49999999999994px;overflow:hidden">
<div class="t" style="left:4.20px;top:5.31px;font-size:25px;font-weight:400;color:#000;transform:scaleX(0.9750);">51,83</div>
</div>
<div class="a" style="left:332px;top:480.8px;width:96px;height:37.49999999999994px;overflow:hidden"><div class="a" style="left:38.4px;top:7.9px;width:19.4px;height:19.4px;box-sizing:border-box;border:2px solid #505050;background:#fff"></div></div>
<div class="a" style="left:20.6px;top:518.3px;width:80.4px;height:75.0px;overflow:hidden">
<div class="t" style="left:3.60px;top:24.56px;font-size:25px;font-weight:400;color:#000;transform:scaleX(0.9750);">5</div>
</div>
<div class="a" style="left:101px;top:518.3px;width:95.6px;height:37.5px;overflow:hidden">
<div class="t" style="left:4.50px;top:5.31px;font-size:25px;font-weight:400;color:#000;transform:scaleX(0.9750);">26</div>
</div>
<div class="a" style="left:196.6px;top:518.3px;width:135.4px;height:37.5px;overflow:hidden">
<div class="t" style="left:4.50px;top:5.31px;font-size:25px;font-weight:400;color:#000;transform:scaleX(0.9818);">27.12.20...</div>
</div>
<div class="a" style="left:428px;top:518.3px;width:117px;height:37.5px;overflow:hidden">
<div class="t" style="left:4.50px;top:5.31px;font-size:25px;font-weight:400;color:#000;transform:scaleX(0.8957);">GIFT</div>
</div>
<div class="a" style="left:332px;top:518.3px;width:96px;height:37.5px;overflow:hidden"><div class="a" style="left:38.4px;top:7.9px;width:19.4px;height:19.4px;box-sizing:border-box;border:2px solid #505050;background:#fff"></div></div>
<div class="a" style="left:101px;top:555.8px;width:95.6px;height:37.5px;overflow:hidden">
<div class="t" style="left:4.50px;top:5.31px;font-size:25px;font-weight:400;color:#000;transform:scaleX(0.9750);">27</div>
</div>
<div class="a" style="left:196.6px;top:555.8px;width:135.4px;height:37.5px;overflow:hidden">
<div class="t" style="left:4.50px;top:5.31px;font-size:25px;font-weight:400;color:#000;transform:scaleX(0.9818);">27.12.20...</div>
</div>
<div class="a" style="left:428px;top:555.8px;width:117px;height:37.5px;overflow:hidden">
<div class="t" style="left:4.50px;top:5.31px;font-size:25px;font-weight:400;color:#000;transform:scaleX(0.8957);">GIFT</div>
</div>
<div class="a" style="left:332px;top:555.8px;width:96px;height:37.5px;overflow:hidden"><div class="a" style="left:38.4px;top:7.9px;width:19.4px;height:19.4px;box-sizing:border-box;border:2px solid #505050;background:#fff"></div></div>
<div class="a" style="left:20.6px;top:593.3px;width:80.4px;height:75.0px;overflow:hidden">
<div class="t" style="left:3.60px;top:24.56px;font-size:25px;font-weight:400;color:#000;transform:scaleX(0.9750);">6</div>
</div>
<div class="a" style="left:101px;top:593.3px;width:95.6px;height:37.5px;overflow:hidden">
<div class="t" style="left:4.50px;top:5.31px;font-size:25px;font-weight:400;color:#000;transform:scaleX(0.9750);">28</div>
</div>
<div class="a" style="left:196.6px;top:593.3px;width:135.4px;height:37.5px;overflow:hidden">
<div class="t" style="left:4.50px;top:5.31px;font-size:25px;font-weight:400;color:#000;transform:scaleX(0.9818);">27.12.20...</div>
</div>
<div class="a" style="left:428px;top:593.3px;width:117px;height:37.5px;overflow:hidden">
<div class="t" style="left:4.50px;top:5.31px;font-size:25px;font-weight:400;color:#000;transform:scaleX(0.8957);">GIFT</div>
</div>
<div class="a" style="left:545px;top:593.3px;width:174px;height:37.5px;overflow:hidden">
<div class="t" style="left:4.20px;top:5.31px;font-size:25px;font-weight:400;color:#000;transform:scaleX(0.9750);">935,15</div>
</div>
<div class="a" style="left:719px;top:593.3px;width:211.60000000000002px;height:37.5px;overflow:hidden">
<div class="t" style="left:4.20px;top:5.31px;font-size:25px;font-weight:400;color:#000;transform:scaleX(0.9750);">65,46</div>
</div>
<div class="a" style="left:930.6px;top:593.3px;width:223.60000000000002px;height:37.5px;overflow:hidden">
<div class="t" style="left:4.20px;top:5.31px;font-size:25px;font-weight:400;color:#000;transform:scaleX(0.9750);">1000,61</div>
</div>
<div class="a" style="left:1154.2px;top:593.3px;width:148.29999999999995px;height:37.5px;overflow:hidden">
<div class="t" style="left:4.20px;top:5.31px;font-size:25px;font-weight:400;color:#000;transform:scaleX(0.9750);">0</div>
</div>
<div class="a" style="left:1302.5px;top:593.3px;width:186.20000000000005px;height:37.5px;overflow:hidden">
<div class="t" style="left:4.20px;top:5.31px;font-size:25px;font-weight:400;color:#000;transform:scaleX(0.9750);">0</div>
</div>
<div class="a" style="left:1488.7px;top:593.3px;width:197.70000000000005px;height:37.5px;overflow:hidden">
<div class="t" style="left:4.20px;top:5.31px;font-size:25px;font-weight:400;color:#000;transform:scaleX(0.9750);">0</div>
</div>
<div class="a" style="left:1686.4px;top:593.3px;width:164.89999999999986px;height:37.5px;overflow:hidden">
<div class="t" style="left:4.20px;top:5.31px;font-size:25px;font-weight:400;color:#000;transform:scaleX(0.9750);">1328,6</div>
</div>
<div class="a" style="left:1851.3px;top:593.3px;width:202.70000000000005px;height:37.5px;overflow:hidden">
<div class="t" style="left:4.20px;top:5.31px;font-size:25px;font-weight:400;color:#000;transform:scaleX(0.9750);">86,92</div>
</div>
<div class="a" style="left:2054px;top:593.3px;width:83.69999999999982px;height:37.5px;overflow:hidden">
<div class="t" style="left:4.20px;top:5.31px;font-size:25px;font-weight:400;color:#000;transform:scaleX(0.9750);">0</div>
</div>
<div class="a" style="left:332px;top:593.3px;width:96px;height:37.5px;overflow:hidden"><div class="a" style="left:38.4px;top:7.9px;width:19.4px;height:19.4px;box-sizing:border-box;border:2px solid #0A7AD8;background:#fff"></div></div>
<div class="a" style="left:101px;top:630.8px;width:95.6px;height:37.5px;overflow:hidden">
<div class="t" style="left:4.50px;top:5.31px;font-size:25px;font-weight:400;color:#000;transform:scaleX(0.9750);">29</div>
</div>
<div class="a" style="left:196.6px;top:630.8px;width:135.4px;height:37.5px;overflow:hidden">
<div class="t" style="left:4.50px;top:5.31px;font-size:25px;font-weight:400;color:#000;transform:scaleX(0.9818);">27.12.20...</div>
</div>
<div class="a" style="left:428px;top:630.8px;width:117px;height:37.5px;overflow:hidden">
<div class="t" style="left:4.50px;top:5.31px;font-size:25px;font-weight:400;color:#000;transform:scaleX(0.8957);">GIFT</div>
</div>
<div class="a" style="left:545px;top:630.8px;width:174px;height:37.5px;overflow:hidden">
<div class="t" style="left:4.20px;top:5.31px;font-size:25px;font-weight:400;color:#000;transform:scaleX(0.9750);">935,15</div>
</div>
<div class="a" style="left:719px;top:630.8px;width:211.60000000000002px;height:37.5px;overflow:hidden">
<div class="t" style="left:4.20px;top:5.31px;font-size:25px;font-weight:400;color:#000;transform:scaleX(0.9750);">65,46</div>
</div>
<div class="a" style="left:930.6px;top:630.8px;width:223.60000000000002px;height:37.5px;overflow:hidden">
<div class="t" style="left:4.20px;top:5.31px;font-size:25px;font-weight:400;color:#000;transform:scaleX(0.9750);">1000,61</div>
</div>
<div class="a" style="left:1686.4px;top:630.8px;width:164.89999999999986px;height:37.5px;overflow:hidden">
<div class="t" style="left:4.20px;top:5.31px;font-size:25px;font-weight:400;color:#000;transform:scaleX(0.9750);">1328,6</div>
</div>
<div class="a" style="left:1851.3px;top:630.8px;width:202.70000000000005px;height:37.5px;overflow:hidden">
<div class="t" style="left:4.20px;top:5.31px;font-size:25px;font-weight:400;color:#000;transform:scaleX(0.9750);">86,92</div>
</div>
<div class="a" style="left:332px;top:630.8px;width:96px;height:37.5px;overflow:hidden"><div class="a" style="left:38.4px;top:7.9px;width:19.4px;height:19.4px;box-sizing:border-box;border:2px solid #505050;background:#fff"></div></div>
<div class="a" style="left:20.6px;top:668.3px;width:80.4px;height:75.0px;overflow:hidden">
<div class="t" style="left:3.60px;top:24.56px;font-size:25px;font-weight:400;color:#000;transform:scaleX(0.9750);">7</div>
</div>
<div class="a" style="left:101px;top:668.3px;width:95.6px;height:37.5px;overflow:hidden">
<div class="t" style="left:4.50px;top:5.31px;font-size:25px;font-weight:400;color:#000;transform:scaleX(0.9750);">30</div>
</div>
<div class="a" style="left:196.6px;top:668.3px;width:135.4px;height:37.5px;overflow:hidden">
<div class="t" style="left:4.50px;top:5.31px;font-size:25px;font-weight:400;color:#000;transform:scaleX(0.9818);">27.12.20...</div>
</div>
<div class="a" style="left:428px;top:668.3px;width:117px;height:37.5px;overflow:hidden">
<div class="t" style="left:4.50px;top:5.31px;font-size:25px;font-weight:400;color:#000;transform:scaleX(0.8957);">GIFT</div>
</div>
<div class="a" style="left:332px;top:668.3px;width:96px;height:37.5px;overflow:hidden"><div class="a" style="left:38.4px;top:7.9px;width:19.4px;height:19.4px;box-sizing:border-box;border:2px solid #505050;background:#fff"></div></div>
<div class="a" style="left:101px;top:705.8px;width:95.6px;height:37.5px;overflow:hidden">
<div class="t" style="left:4.50px;top:5.31px;font-size:25px;font-weight:400;color:#000;transform:scaleX(0.9750);">31</div>
</div>
<div class="a" style="left:196.6px;top:705.8px;width:135.4px;height:37.5px;overflow:hidden">
<div class="t" style="left:4.50px;top:5.31px;font-size:25px;font-weight:400;color:#000;transform:scaleX(0.9818);">27.12.20...</div>
</div>
<div class="a" style="left:428px;top:705.8px;width:117px;height:37.5px;overflow:hidden">
<div class="t" style="left:4.50px;top:5.31px;font-size:25px;font-weight:400;color:#000;transform:scaleX(0.8957);">GIFT</div>
</div>
<div class="a" style="left:332px;top:705.8px;width:96px;height:37.5px;overflow:hidden"><div class="a" style="left:38.4px;top:7.9px;width:19.4px;height:19.4px;box-sizing:border-box;border:2px solid #505050;background:#fff"></div></div>
<div class="a" style="left:20.6px;top:743.3px;width:80.4px;height:75.0px;overflow:hidden">
<div class="t" style="left:3.60px;top:24.56px;font-size:25px;font-weight:400;color:#000;transform:scaleX(0.9750);">8</div>
</div>
<div class="a" style="left:101px;top:743.3px;width:95.6px;height:37.5px;overflow:hidden">
<div class="t" style="left:4.50px;top:5.31px;font-size:25px;font-weight:400;color:#000;transform:scaleX(0.9750);">32</div>
</div>
<div class="a" style="left:196.6px;top:743.3px;width:135.4px;height:37.5px;overflow:hidden">
<div class="t" style="left:4.50px;top:5.31px;font-size:25px;font-weight:400;color:#000;transform:scaleX(0.9818);">27.12.20...</div>
</div>
<div class="a" style="left:428px;top:743.3px;width:117px;height:37.5px;overflow:hidden">
<div class="t" style="left:4.50px;top:5.31px;font-size:25px;font-weight:400;color:#000;transform:scaleX(0.8957);">GIFT</div>
</div>
<div class="a" style="left:545px;top:743.3px;width:174px;height:37.5px;overflow:hidden">
<div class="t" style="left:4.20px;top:5.31px;font-size:25px;font-weight:400;color:#000;transform:scaleX(0.9750);">11479,96</div>
</div>
<div class="a" style="left:719px;top:743.3px;width:211.60000000000002px;height:37.5px;overflow:hidden">
<div class="t" style="left:4.20px;top:5.31px;font-size:25px;font-weight:400;color:#000;transform:scaleX(0.9750);">2295,99</div>
</div>
<div class="a" style="left:930.6px;top:743.3px;width:223.60000000000002px;height:37.5px;overflow:hidden">
<div class="t" style="left:4.20px;top:5.31px;font-size:25px;font-weight:400;color:#000;transform:scaleX(0.9750);">13775,95</div>
</div>
<div class="a" style="left:1154.2px;top:743.3px;width:148.29999999999995px;height:37.5px;overflow:hidden">
<div class="t" style="left:4.20px;top:5.31px;font-size:25px;font-weight:400;color:#000;transform:scaleX(0.9750);">0</div>
</div>
<div class="a" style="left:1302.5px;top:743.3px;width:186.20000000000005px;height:37.5px;overflow:hidden">
<div class="t" style="left:4.20px;top:5.31px;font-size:25px;font-weight:400;color:#000;transform:scaleX(0.9750);">0</div>
</div>
<div class="a" style="left:1488.7px;top:743.3px;width:197.70000000000005px;height:37.5px;overflow:hidden">
<div class="t" style="left:4.20px;top:5.31px;font-size:25px;font-weight:400;color:#000;transform:scaleX(0.9750);">0</div>
</div>
<div class="a" style="left:1686.4px;top:743.3px;width:164.89999999999986px;height:37.5px;overflow:hidden">
<div class="t" style="left:4.20px;top:5.31px;font-size:25px;font-weight:400;color:#000;transform:scaleX(0.9750);">18282,3</div>
</div>
<div class="a" style="left:1851.3px;top:743.3px;width:202.70000000000005px;height:37.5px;overflow:hidden">
<div class="t" style="left:4.20px;top:5.31px;font-size:25px;font-weight:400;color:#000;transform:scaleX(0.9750);">3047,05</div>
</div>
<div class="a" style="left:2054px;top:743.3px;width:83.69999999999982px;height:37.5px;overflow:hidden">
<div class="t" style="left:4.20px;top:5.31px;font-size:25px;font-weight:400;color:#000;transform:scaleX(0.9750);">0</div>
</div>
<div class="a" style="left:332px;top:743.3px;width:96px;height:37.5px;overflow:hidden"><div class="a" style="left:38.4px;top:7.9px;width:19.4px;height:19.4px;box-sizing:border-box;border:2px solid #505050;background:#fff"></div></div>
<div class="a" style="left:101px;top:780.8px;width:95.6px;height:37.5px;overflow:hidden">
<div class="t" style="left:4.50px;top:5.31px;font-size:25px;font-weight:400;color:#000;transform:scaleX(0.9750);">33</div>
</div>
<div class="a" style="left:196.6px;top:780.8px;width:135.4px;height:37.5px;overflow:hidden">
<div class="t" style="left:4.50px;top:5.31px;font-size:25px;font-weight:400;color:#000;transform:scaleX(0.9818);">27.12.20...</div>
</div>
<div class="a" style="left:428px;top:780.8px;width:117px;height:37.5px;overflow:hidden">
<div class="t" style="left:4.50px;top:5.31px;font-size:25px;font-weight:400;color:#000;transform:scaleX(0.8957);">GIFT</div>
</div>
<div class="a" style="left:545px;top:780.8px;width:174px;height:37.5px;overflow:hidden">
<div class="t" style="left:4.20px;top:5.31px;font-size:25px;font-weight:400;color:#000;transform:scaleX(0.9750);">11479,96</div>
</div>
<div class="a" style="left:719px;top:780.8px;width:211.60000000000002px;height:37.5px;overflow:hidden">
<div class="t" style="left:4.20px;top:5.31px;font-size:25px;font-weight:400;color:#000;transform:scaleX(0.9750);">2295,99</div>
</div>
<div class="a" style="left:930.6px;top:780.8px;width:223.60000000000002px;height:37.5px;overflow:hidden">
<div class="t" style="left:4.20px;top:5.31px;font-size:25px;font-weight:400;color:#000;transform:scaleX(0.9750);">13775,95</div>
</div>
<div class="a" style="left:1686.4px;top:780.8px;width:164.89999999999986px;height:37.5px;overflow:hidden">
<div class="t" style="left:4.20px;top:5.31px;font-size:25px;font-weight:400;color:#000;transform:scaleX(0.9750);">18282,3</div>
</div>
<div class="a" style="left:1851.3px;top:780.8px;width:202.70000000000005px;height:37.5px;overflow:hidden">
<div class="t" style="left:4.20px;top:5.31px;font-size:25px;font-weight:400;color:#000;transform:scaleX(0.9750);">3047,05</div>
</div>
<div class="a" style="left:332px;top:780.8px;width:96px;height:37.5px;overflow:hidden"><div class="a" style="left:38.4px;top:7.9px;width:19.4px;height:19.4px;box-sizing:border-box;border:2px solid #505050;background:#fff"></div></div>
<div class="a" style="left:20.6px;top:818.3px;width:80.4px;height:17.700000000000045px;overflow:hidden">
<div class="t" style="left:3.60px;top:24.56px;font-size:25px;font-weight:400;color:#000;transform:scaleX(0.9750);">9</div>
</div>
<div class="a" style="left:101px;top:818.3px;width:95.6px;height:17.700000000000045px;overflow:hidden">
<div class="t" style="left:4.50px;top:5.31px;font-size:25px;font-weight:400;color:#000;transform:scaleX(0.9750);">34</div>
</div>
<div class="a" style="left:196.6px;top:818.3px;width:135.4px;height:17.700000000000045px;overflow:hidden">
<div class="t" style="left:4.50px;top:5.31px;font-size:25px;font-weight:400;color:#000;transform:scaleX(0.9818);">27.12.20...</div>
</div>
<div class="a" style="left:428px;top:818.3px;width:117px;height:17.700000000000045px;overflow:hidden">
<div class="t" style="left:4.50px;top:5.31px;font-size:25px;font-weight:400;color:#000;transform:scaleX(0.8957);">GIFT</div>
</div>
<div class="a" style="left:545px;top:818.3px;width:174px;height:17.700000000000045px;overflow:hidden">
<div class="t" style="left:4.20px;top:5.31px;font-size:25px;font-weight:400;color:#000;transform:scaleX(0.9750);">645,68</div>
</div>
<div class="a" style="left:719px;top:818.3px;width:211.60000000000002px;height:17.700000000000045px;overflow:hidden">
<div class="t" style="left:4.20px;top:5.31px;font-size:25px;font-weight:400;color:#000;transform:scaleX(0.9750);">45,2</div>
</div>
<div class="a" style="left:930.6px;top:818.3px;width:223.60000000000002px;height:17.700000000000045px;overflow:hidden">
<div class="t" style="left:4.20px;top:5.31px;font-size:25px;font-weight:400;color:#000;transform:scaleX(0.9750);">690,88</div>
</div>
<div class="a" style="left:1154.2px;top:818.3px;width:148.29999999999995px;height:17.700000000000045px;overflow:hidden">
<div class="t" style="left:4.20px;top:5.31px;font-size:25px;font-weight:400;color:#000;transform:scaleX(0.9750);">0</div>
</div>
<div class="a" style="left:1302.5px;top:818.3px;width:186.20000000000005px;height:17.700000000000045px;overflow:hidden">
<div class="t" style="left:4.20px;top:5.31px;font-size:25px;font-weight:400;color:#000;transform:scaleX(0.9750);">0</div>
</div>
<div class="a" style="left:1488.7px;top:818.3px;width:197.70000000000005px;height:17.700000000000045px;overflow:hidden">
<div class="t" style="left:4.20px;top:5.31px;font-size:25px;font-weight:400;color:#000;transform:scaleX(0.9750);">0</div>
</div>
<div class="a" style="left:1686.4px;top:818.3px;width:164.89999999999986px;height:17.700000000000045px;overflow:hidden">
<div class="t" style="left:4.20px;top:5.31px;font-size:25px;font-weight:400;color:#000;transform:scaleX(0.9750);">954,8</div>
</div>
<div class="a" style="left:1851.3px;top:818.3px;width:202.70000000000005px;height:17.700000000000045px;overflow:hidden">
<div class="t" style="left:4.20px;top:5.31px;font-size:25px;font-weight:400;color:#000;transform:scaleX(0.9750);">62,46</div>
</div>
<div class="a" style="left:2054px;top:818.3px;width:83.69999999999982px;height:17.700000000000045px;overflow:hidden">
<div class="t" style="left:4.20px;top:5.31px;font-size:25px;font-weight:400;color:#000;transform:scaleX(0.9750);">0</div>
</div>
<div class="a" style="left:332px;top:818.3px;width:96px;height:17.700000000000045px;overflow:hidden"><div class="a" style="left:38.4px;top:7.9px;width:19.4px;height:19.4px;box-sizing:border-box;border:2px solid #505050;background:#fff"></div></div>
<svg class="a" style="left:10px;top:623.3px" width="7" height="14"><path d="M0 0L7 7L0 14z" fill="#000"/></svg>
<div class="a" style="left:7px;top:836.2px;width:2130.7px;height:2.6px;background:#A9A9A9;"></div>
<div class="a" style="left:7px;top:838.8px;width:2130.7px;height:81.2px;background:#EFEFEF;"></div>
<div class="a" style="left:7px;top:838.8px;width:2130.7px;height:1.2px;background:#FAFAFA;"></div>
<div class="a" style="left:20px;top:838.8px;width:1.6px;height:81.2px;background:#B5B5B5;"></div>
<div class="a" style="left:200px;top:841.3px;width:130.6px;height:36.4px;background:#E5E7E9;border:1px solid #D9DCDF;box-sizing:border-box;"></div>
<div class="t" style="left:203.00px;top:847.39px;font-size:26px;font-weight:400;color:#222;transform:scaleX(0.9145);">Запис 6 з 1</div>
<div class="a" style="left:7px;top:920px;width:2130.7px;height:2px;background:#C8C8C8;"></div>
<div class="a" style="left:7px;top:922px;width:2130.7px;height:1.2px;background:#FAFAFA;"></div>
<div class="a" style="left:28.7px;top:923.2px;width:1378.3px;height:22.4px;background:#CECECE;"></div>
<svg class="a" style="left:10px;top:929px" width="10" height="12"><path d="M8.5 1L2.5 6L8.5 11" stroke="#606060" stroke-width="2.6" fill="none"/></svg>
<svg class="a" style="left:2121px;top:929px" width="10" height="12"><path d="M1.5 1L7.5 6L1.5 11" stroke="#606060" stroke-width="2.6" fill="none"/></svg>
<div class="a" style="left:8px;top:959px;width:5px;height:1.5px;background:#B2B2B2;"></div>
<div class="a" style="left:8px;top:962px;width:5px;height:1.5px;background:#B2B2B2;"></div>
<div class="a" style="left:8px;top:965px;width:5px;height:1.5px;background:#B2B2B2;"></div>
<div class="a" style="left:8px;top:968px;width:5px;height:1.5px;background:#B2B2B2;"></div>
<div class="a" style="left:8px;top:971px;width:5px;height:1.5px;background:#B2B2B2;"></div>
<div class="a" style="left:8px;top:974px;width:5px;height:1.5px;background:#B2B2B2;"></div>
<div class="a" style="left:8px;top:977px;width:5px;height:1.5px;background:#B2B2B2;"></div>
<div class="a" style="left:8px;top:980px;width:5px;height:1.5px;background:#B2B2B2;"></div>
<svg class="a" style="left:21px;top:961px" width="22" height="22" viewBox="0 0 22 22">
<defs><linearGradient id="gp21_961" x1="0" y1="0" x2="0.3" y2="1"><stop offset="0" stop-color="#B0F2AA"/><stop offset="0.55" stop-color="#95DC92"/><stop offset="1" stop-color="#6CB86A"/></linearGradient></defs>
<path d="M8.1 0.7h5.7v7.6h7.4v5.4h-7.4v7.5H8.1v-7.5H0.5V8.3h7.6z" fill="url(#gp21_961)" stroke="#78C076" stroke-width="1"/>
<path d="M10.9 2.5v16M2.5 11h16.5" stroke="#B2F0AE" stroke-width="1.4" opacity="0.7"/>
</svg>
<div class="t" style="left:50.20px;top:962.34px;font-size:18.5px;font-weight:400;color:#1E1E1E;transform:scaleX(0.9739);">Створити переоблік</div>
<svg class="a" style="left:226px;top:958px" width="26" height="26" viewBox="0 0 26 26">
<path d="M1 25L3 18.5L17.5 4L22 8.5L7.5 23z" fill="#C9C9C9" stroke="#9C9C9C" stroke-width="0.9" stroke-dasharray="1.2 0.8"/>
<path d="M4.5 19L18.5 5" stroke="#E6E6E6" stroke-width="1.6"/>
<path d="M1 25L3 18.5L7.5 23z" fill="#D8D8D8"/>
<path d="M1 25L1.9 22L4 24.1z" fill="#7A7A7A"/>
<path d="M17.5 4L19.5 2L24 6.5L22 8.5z" fill="#B8B8B8"/>
<path d="M19.5 2L20.5 1Q21.5 0.3 22.5 1L25 3.5Q25.7 4.5 25 5.5L24 6.5z" fill="#8C8C8C"/>
</svg>
<div class="t" style="left:256.50px;top:962.34px;font-size:18.5px;font-weight:400;color:#8A8A8A;transform:scaleX(0.9224);">Редагувати</div>
<svg class="a" style="left:358px;top:960px" width="23" height="22" viewBox="0 0 23 22">
<path d="M3.2 3.2L19.8 18.8M19.8 3.2L3.2 18.8" stroke="#9E9E9E" stroke-width="6" stroke-linecap="square"/>
<path d="M3.5 3.5L19.5 18.5M19.5 3.5L3.5 18.5" stroke="#C4C4C4" stroke-width="3" stroke-linecap="square"/>
</svg>
<div class="t" style="left:387.00px;top:962.34px;font-size:18.5px;font-weight:400;color:#8A8A8A;transform:scaleX(0.9259);">Видалити</div>
<div class="a" style="left:474.5px;top:954px;width:1.3px;height:34px;background:#ABABAB;"></div>
<svg class="a" style="left:484px;top:962px" width="22" height="19"><rect x="0" y="0" width="1.3" height="18" fill="#666"/><rect x="3" y="0" width="1.3" height="14.8" fill="#777"/><rect x="6.3" y="0" width="1.3" height="14.8" fill="#777"/><rect x="9.3" y="0" width="1.3" height="14.8" fill="#777"/><rect x="12.3" y="0" width="2.6" height="14.8" fill="#555"/><rect x="16.3" y="0" width="1.3" height="14.8" fill="#777"/><rect x="19.6" y="0" width="1.5" height="18" fill="#555"/><rect x="3.3" y="16.2" width="1.2" height="1.2" fill="#666"/><rect x="6.6" y="16.2" width="1.2" height="1.2" fill="#666"/><rect x="9.6" y="16.2" width="1.2" height="1.2" fill="#666"/><rect x="12.6" y="16.2" width="1.2" height="1.2" fill="#666"/><rect x="15.9" y="16.2" width="1.2" height="1.2" fill="#666"/></svg>
<div class="t" style="left:513.00px;top:962.34px;font-size:18.5px;font-weight:400;color:#1E1E1E;transform:scaleX(0.9496);">Сканер ШК</div>
<svg class="a" style="left:608px;top:968px" width="9" height="5"><path d="M0 0h9L4.5 5z" fill="#222"/></svg>
<div class="a" style="left:629px;top:954px;width:1.3px;height:34px;background:#ABABAB;"></div>
<svg class="a" style="left:641px;top:963px" width="19" height="20"><rect x="0" y="0.00" width="7.8" height="1.6" fill="#9A9A9A"/><rect x="10.8" y="0.00" width="7.4" height="1.6" fill="#9A9A9A"/><rect x="0" y="3.03" width="7.8" height="1.6" fill="#909090"/><rect x="10.8" y="3.03" width="7.4" height="1.6" fill="#909090"/><rect x="0" y="6.06" width="7.8" height="1.6" fill="#868686"/><rect x="10.8" y="6.06" width="7.4" height="1.6" fill="#868686"/><rect x="0" y="9.09" width="7.8" height="1.6" fill="#7C7C7C"/><rect x="10.8" y="9.09" width="7.4" height="1.6" fill="#7C7C7C"/><rect x="0" y="12.12" width="7.8" height="1.6" fill="#727272"/><rect x="10.8" y="12.12" width="7.4" height="1.6" fill="#727272"/><rect x="0" y="15.15" width="7.8" height="1.6" fill="#686868"/><rect x="10.8" y="15.15" width="7.4" height="1.6" fill="#686868"/></svg>
<svg class="a" style="left:2036px;top:960px" width="24" height="25" viewBox="0 0 24 25">
<defs><linearGradient id="rf2037_960" x1="0" y1="0" x2="0.5" y2="1"><stop offset="0" stop-color="#B2E2FB"/><stop offset="0.55" stop-color="#94CCF0"/><stop offset="1" stop-color="#62C6F8"/></linearGradient></defs>
<ellipse cx="12.5" cy="23" rx="8.5" ry="1.4" fill="#000" opacity="0.1"/>
<path d="M1.2 1.2H11V10.6L8.2 8.2A4.6 4.6 0 0 0 11 16.2V22.2A10.6 10.6 0 0 1 3.4 4.4Z" fill="url(#rf2037_960)" stroke="#80B6E6" stroke-width="0.9" stroke-linejoin="round"/>
<path d="M1.2 1.2H11V10.6L8.2 8.2A4.6 4.6 0 0 0 11 16.2V22.2A10.6 10.6 0 0 1 3.4 4.4Z" transform="rotate(180 11.6 11.7)" fill="url(#rf2037_960)" stroke="#70AADF" stroke-width="0.9" stroke-linejoin="round"/>
</svg>
<div class="t" style="left:2066.00px;top:962.34px;font-size:18.5px;font-weight:400;color:#1E1E1E;transform:scaleX(0.9530);">Оновити</div>
<svg class="a" style="left:2147.5px;top:977px" width="9" height="5"><path d="M0 0h9L4.5 5z" fill="#000"/></svg>
<div class="a" style="left:3px;top:996px;width:2159px;height:17px;background:#E3E3E3;"></div>
<div class="a" style="left:3px;top:1013px;width:2159px;height:1.2px;background:#F4F6F6;"></div>
<div class="a" style="left:3px;top:1014px;width:2px;height:270px;background:#F8F8F8;"></div>
<div class="a" style="left:9px;top:1018px;width:2152px;height:52px;background:#EFEFEF;"></div>
<div class="t" style="left:15.10px;top:1034.29px;font-size:19.5px;font-weight:700;color:#111;transform:scaleX(1.0011);">Перетягніть заголовок колонки сюди для угруповання з цього стовпцю</div>
<div class="a" style="left:9px;top:1069.8px;width:2152px;height:211px;background:#FFFFFF;"></div>
<div class="a" style="left:19.8px;top:1069.8px;width:1.2px;height:29px;background:#E6E6E6;"></div>
<div class="a" style="left:160.5px;top:1069.8px;width:1.2px;height:29px;background:#E6E6E6;"></div>
<div class="a" style="left:227.9px;top:1069.8px;width:1.2px;height:29px;background:#E6E6E6;"></div>
<div class="a" style="left:380.5px;top:1069.8px;width:1.2px;height:29px;background:#E6E6E6;"></div>
<div class="a" style="left:535.5px;top:1069.8px;width:1.2px;height:29px;background:#E6E6E6;"></div>
<div class="a" style="left:685.0px;top:1069.8px;width:1.2px;height:29px;background:#E6E6E6;"></div>
<div class="a" style="left:950.7px;top:1069.8px;width:1.2px;height:29px;background:#E6E6E6;"></div>
<div class="a" style="left:1292.9px;top:1069.8px;width:1.2px;height:29px;background:#E6E6E6;"></div>
<div class="a" style="left:24.3px;top:1069.8px;width:132.7px;height:28.799999999999955px;overflow:hidden">
<div class="t" style="left:43.45px;top:7.31px;font-size:17px;font-weight:400;color:#1E1E1E;transform:scaleX(0.9932);">№ п/п</div>
</div>
<div class="a" style="left:165px;top:1069.8px;width:59.400000000000006px;height:28.799999999999955px;overflow:hidden">
<div class="t" style="left:20.25px;top:7.31px;font-size:17px;font-weight:400;color:#1E1E1E;transform:scaleX(1.1118);">ID</div>
</div>
<div class="a" style="left:232.4px;top:1069.8px;width:144.6px;height:28.799999999999955px;overflow:hidden">
<div class="t" style="left:10.05px;top:7.31px;font-size:17px;font-weight:400;color:#1E1E1E;transform:scaleX(0.9985);">Дата документу</div>
</div>
<div class="a" style="left:385px;top:1069.8px;width:147px;height:28.799999999999955px;overflow:hidden">
<div class="t" style="left:28.48px;top:7.31px;font-size:17px;font-weight:400;color:#1E1E1E;transform:scaleX(0.9995);">Користувач</div>
</div>
<div class="a" style="left:540px;top:1069.8px;width:141.5px;height:28.799999999999955px;overflow:hidden">
<div class="t" style="left:12.43px;top:7.31px;font-size:17px;font-weight:400;color:#1E1E1E;transform:scaleX(0.9381);">Сума роздрібна</div>
</div>
<div class="a" style="left:689.5px;top:1069.8px;width:257.70000000000005px;height:28.799999999999955px;overflow:hidden">
<div class="t" style="left:13.18px;top:7.31px;font-size:17px;font-weight:400;color:#1E1E1E;transform:scaleX(0.9667);">Строк матеріальних цінностей</div>
</div>
<div class="a" style="left:955.2px;top:1069.8px;width:334.20000000000005px;height:28.799999999999955px;overflow:hidden">
<div class="t" style="left:6.02px;top:7.31px;font-size:17px;font-weight:400;color:#1E1E1E;transform:scaleX(0.9667);">Строк матеріальних цінностей у наявності</div>
</div>
<div class="a" style="left:1297.4px;top:1069.8px;width:154.5999999999999px;height:28.799999999999955px;overflow:hidden">
<div class="t" style="left:40.53px;top:7.31px;font-size:17px;font-weight:400;color:#1E1E1E;transform:scaleX(0.9625);">Коментар</div>
</div>
<svg class="a" style="left:8.5px;top:1078px" width="11" height="15" viewBox="0 0 11 15"><rect x="3.5" y="0.5" width="6.2" height="1.6" rx="0.5" fill="#333"/><rect x="3.5" y="3.5" width="6.2" height="1.6" rx="0.5" fill="#333"/><rect x="3.5" y="6.5" width="6.2" height="1.6" rx="0.5" fill="#333"/><rect x="3.5" y="9.5" width="6.2" height="1.6" rx="0.5" fill="#333"/><rect x="3.5" y="12.5" width="6.2" height="1.6" rx="0.5" fill="#333"/><rect x="0.6" y="0.5" width="1.4" height="1.6" fill="#333"/><rect x="0.6" y="6.5" width="1.4" height="1.6" fill="#333"/><rect x="0.6" y="12.5" width="1.4" height="1.6" fill="#333"/></svg>
<div class="t" style="left:549.00px;top:1156.23px;font-size:25px;font-weight:400;color:#8C8C8C;transform:scaleX(0.9509);">&lt;Немає даних для відображення&gt;</div>
<div class="a" style="left:9px;top:1236px;width:1447px;height:2.2px;background:#A9A9A9;"></div>
<div class="a" style="left:9px;top:1238.2px;width:1447px;height:42px;background:#EFEFEF;"></div>
<div class="a" style="left:20.2px;top:1238.2px;width:1.5px;height:42px;background:#B5B5B5;"></div>
<div class="a" style="left:1455px;top:1236px;width:1.6px;height:45px;background:#B5B5B5;"></div>
<div class="a" style="left:231px;top:1240.4px;width:149px;height:36.1px;background:#E5E7E9;border:1px solid #D9DCDF;box-sizing:border-box;"></div>
<div class="t" style="left:235.40px;top:1246.49px;font-size:26px;font-weight:400;color:#222;transform:scaleX(0.9130);">Запис 0 з 0</div>
<div class="a" style="left:3px;top:1284px;width:2159px;height:37px;background:#F0F0F0;"></div>
<div class="a" style="left:8px;top:1284.6px;width:186.7px;height:33.1px;background:#F0F0F0;border:1.6px solid #222;box-sizing:border-box;"></div>
<div class="t" style="left:12.00px;top:1291.15px;font-size:17.3px;font-weight:400;color:#1E1E1E;transform:scaleX(0.9443);">Головна</div>
<div class="a" style="left:198.2px;top:1284px;width:186.6px;height:33.5px;background:#FFD3A6;border:1.6px solid #3C8EE2;box-sizing:border-box;"></div>
<div class="t" style="left:201.80px;top:1291.25px;font-size:17.3px;font-weight:400;color:#1E1E1E;transform:scaleX(0.9614);">Інвентаризація</div>
<div class="a" style="left:3px;top:1320.5px;width:2159px;height:1.5px;background:#DADADA;"></div>
<div class="a" style="left:3px;top:1322px;width:2159px;height:5px;background:#F0F0F0;"></div>
<div class="a" style="left:300px;top:1323px;width:1px;height:4px;background:#C0C0C0;"></div>
<div class="a" style="left:606.5px;top:1323px;width:1px;height:4px;background:#C0C0C0;"></div>
<div class="a" style="left:666px;top:1323px;width:1px;height:4px;background:#C0C0C0;"></div>
<div class="a" style="left:1121px;top:1323px;width:1px;height:4px;background:#C0C0C0;"></div>
<div class="a" style="left:0px;top:0px;width:3px;height:1327px;background:#000;"></div>
<div class="a" style="left:2162px;top:0px;width:8px;height:1327px;background:#000;"></div>
<div class="a" style="left:3px;top:138.1px;width:2162px;height:4.2px;background:#FF0000;"></div>
<div class="a" style="left:3px;top:992.0px;width:2162px;height:4.2px;background:#FF0000;"></div>
<div class="a" style="left:3px;top:138.1px;width:4.2px;height:858.1px;background:#FF0000;"></div>
<div class="a" style="left:2160.8px;top:138.1px;width:4.2px;height:858.1px;background:#FF0000;"></div>
<div class="a" style="left:5px;top:1014.2px;width:2160px;height:4.2px;background:#FF0000;"></div>
<div class="a" style="left:5px;top:1279.6px;width:2160px;height:4.2px;background:#FF0000;"></div>
<div class="a" style="left:5px;top:1014.2px;width:4.2px;height:269.5999999999999px;background:#FF0000;"></div>
<div class="a" style="left:2160.8px;top:1014.2px;width:4.2px;height:269.5999999999999px;background:#FF0000;"></div>
<svg class="a" style="left:0;top:0" width="1200" height="200" viewBox="0 0 1200 200">
<path d="M1099.5 150H1104.6V175.8H1098.8V157.2L1094.3 160.7L1091.6 156.8Z" transform="translate(0.5,1)" fill="none" stroke="#555" stroke-width="8" stroke-linejoin="round" opacity="0.45"/>
<path d="M1099.5 150H1104.6V175.8H1098.8V157.2L1094.3 160.7L1091.6 156.8Z" fill="#fff" stroke="#fff" stroke-width="7.5" stroke-linejoin="round"/>
<path d="M1099.5 150H1104.6V175.8H1098.8V157.2L1094.3 160.7L1091.6 156.8Z" fill="#FF0000"/>
</svg>
<svg class="a" style="left:1034px;top:1018px" width="40" height="46" viewBox="-10 -10 40 46">
<path d="M0 25.8H17.8V21H6.9L13.6 14Q16.9 10.5 16.9 7.5Q16.9 0 8.6 0Q4 0 0.5 3.4L3.5 6.8Q5.8 4.3 8.4 4.3Q11.6 4.3 11.6 7.4Q11.6 9.3 9.5 11.5L0 21.5Z" transform="translate(0.5,1)" fill="#555" stroke="#555" stroke-width="8" stroke-linejoin="round" opacity="0.45"/>
<path d="M0 25.8H17.8V21H6.9L13.6 14Q16.9 10.5 16.9 7.5Q16.9 0 8.6 0Q4 0 0.5 3.4L3.5 6.8Q5.8 4.3 8.4 4.3Q11.6 4.3 11.6 7.4Q11.6 9.3 9.5 11.5L0 21.5Z" fill="#fff" stroke="#fff" stroke-width="7.5" stroke-linejoin="round"/>
<path d="M0 25.8H17.8V21H6.9L13.6 14Q16.9 10.5 16.9 7.5Q16.9 0 8.6 0Q4 0 0.5 3.4L3.5 6.8Q5.8 4.3 8.4 4.3Q11.6 4.3 11.6 7.4Q11.6 9.3 9.5 11.5L0 21.5Z" fill="#FF0000"/>
</svg>
</body></html>
